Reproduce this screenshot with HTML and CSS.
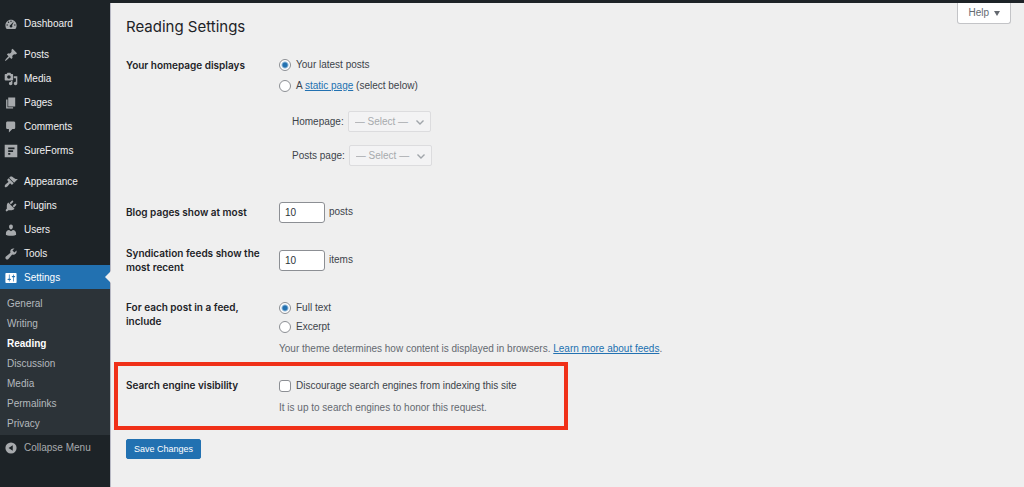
FILE: index.html
```html
<!DOCTYPE html>
<html lang="en">
<head>
    <meta charset="UTF-8">
    <meta name="viewport" content="width=device-width, initial-scale=1.0">
    <title>Reading Settings</title>
    <link rel="stylesheet" href="styles.css">
</head>
<body>

    <!-- Admin bar -->
    <div class="admin-bar"></div>

    <div class="layout">
        <!-- Admin menu -->
        <nav class="menu">
            <ul class="menu-list">
                <li><a href="#" class="menu-link">
                    <svg class="icon" viewBox="0 0 20 20"><path fill-rule="evenodd" d="M3.76 17h12.48c1.1-1.37 1.76-3.11 1.76-5 0-4.42-3.58-8-8-8s-8 3.58-8 8c0 1.89.66 3.63 1.76 5zM9 6a1 1 0 1 0 2 0 1 1 0 1 0-2 0zM5.5 7.5a1 1 0 1 0 2 0 1 1 0 1 0-2 0zM3.5 11.500a1 1 0 1 0 2 0 1 1 0 1 0-2 0zM14.500 11.500a1 1 0 1 0 2 0 1 1 0 1 0-2 0zM14 6.500L11.500 12.200c.9.900.7 2.800-1.500 2.800-2 0-2.600-2.200-1.200-3.100z"/></svg>
                    Dashboard</a></li>
                <li class="separator"></li>
                <li><a href="#" class="menu-link">
                    <svg class="icon" viewBox="0 0 20 20"><path d="M10.44 3.02l1.82-1.82 6.36 6.35-1.83 1.82c-1.05-.68-2.48-.57-3.41.36l-.75.75c-.92.93-1.04 2.35-.35 3.41l-1.83 1.82-2.41-2.41-2.8 2.79c-.42.42-3.38 2.71-3.8 2.29s1.86-3.39 2.28-3.81l2.79-2.79L4.1 9.36l1.83-1.82c1.05.69 2.48.57 3.4-.36l.75-.75c.93-.92 1.05-2.35.36-3.41z"/></svg>
                    Posts</a></li>
                <li><a href="#" class="menu-link">
                    <svg class="icon" viewBox="0 0 20 20"><path d="M13 11V4c0-.55-.45-1-1-1h-1.67L9 1H5L3.67 3H2c-.55 0-1 .45-1 1v7c0 .55.45 1 1 1h10c.55 0 1-.45 1-1zM7 4.500c1.380 0 2.500 1.120 2.500 2.500S8.380 9.500 7 9.500 4.500 8.380 4.500 7 5.620 4.500 7 4.500zM14 6h5v10.500c0 1.380-1.120 2.500-2.500 2.500S14 17.880 14 16.500s1.120-2.500 2.500-2.500c.17 0 .34.02.5.05V9h-3V6zm-4 8.050V13h2v3.500c0 1.380-1.120 2.500-2.500 2.500S7 17.880 7 16.500 8.120 14 9.500 14c.17 0 .34.02.5.05z"/></svg>
                    Media</a></li>
                <li><a href="#" class="menu-link">
                    <svg class="icon" viewBox="0 0 20 20"><path d="M6 15V2h10v13H6zm-1 1h8v2H3V5h2v11z"/></svg>
                    Pages</a></li>
                <li><a href="#" class="menu-link">
                    <svg class="icon" viewBox="0 0 20 20"><path d="M5 2h9c1.100 0 2 .9 2 2v7c0 1.100-.9 2-2 2h-2l-5 5v-5H5c-1.100 0-2-.9-2-2V4c0-1.100.9-2 2-2z"/></svg>
                    Comments</a></li>
                <li><a href="#" class="menu-link">
                    <svg class="icon" viewBox="0 0 20 20"><path fill-rule="evenodd" d="M1 1h18v18H1zM6 5v2.500h9V5zM6 9v2.500h7V9zM6 13v2.500h3V13z"/></svg>
                    SureForms</a></li>
                <li class="separator"></li>
                <li><a href="#" class="menu-link">
                    <svg class="icon" viewBox="0 0 20 20"><path d="M14.480 11.060L7.410 3.990l1.500-1.500c.5-.56 2.300-.47 3.510.32 1.210.8 1.430 1.280 2.910 2.100 1.180.64 2.450 1.260 4.450.85zm-.71.71L6.700 4.700 4.930 6.470c-.39.39-.39 1.020 0 1.410l1.060 1.060c.39.39.39 1.030 0 1.420-.6.6-1.430 1.110-2.210 1.690-.35.26-.7.53-1.010.84C1.430 14.230.4 16.080 1.400 17.070c.99 1 2.840-.03 4.180-1.360.31-.31.58-.66.85-1.020.57-.78 1.080-1.610 1.690-2.210.39-.39 1.020-.39 1.410 0l1.060 1.060c.39.39 1.020.39 1.410 0z"/></svg>
                    Appearance</a></li>
                <li><a href="#" class="menu-link">
                    <svg class="icon" viewBox="0 0 20 20"><path d="M13.110 4.360L9.870 7.600 8 5.730l3.240-3.240c.35-.34 1.050-.2 1.560.32.52.51.66 1.210.31 1.550zm-8 1.770l.91-1.120 9.010 9.010-1.190.84c-.71.71-2.630 1.160-3.820 1.160H6.140L4.900 17.260c-.59.59-1.540.59-2.120 0-.59-.58-.59-1.530 0-2.120l1.240-1.240v-3.880c0-1.130.4-3.190 1.090-3.890zm7.260 3.970l3.240-3.240c.34-.35 1.040-.21 1.550.31.52.51.66 1.210.31 1.550l-3.240 3.250z"/></svg>
                    Plugins</a></li>
                <li><a href="#" class="menu-link">
                    <svg class="icon" viewBox="0 0 20 20"><path d="M10 9.250c-2.270 0-2.730-3.440-2.730-3.440C7 4.020 7.820 2 9.970 2c2.160 0 2.980 2.020 2.710 3.810 0 0-.41 3.440-2.680 3.440zm0 2.570L12.720 10c2.390 0 4.520 2.330 4.520 4.530v2.490s-3.650 1.130-7.240 1.130c-3.650 0-7.240-1.130-7.240-1.130v-2.490c0-2.250 1.940-4.480 4.470-4.480z"/></svg>
                    Users</a></li>
                <li><a href="#" class="menu-link">
                    <svg class="icon" viewBox="0 0 20 20"><path d="M16.680 9.770c-1.340 1.340-3.300 1.670-4.950.99l-5.410 6.520c-.99.99-2.590.99-3.580 0s-.99-2.590 0-3.570l6.520-5.420c-.68-1.650-.35-3.610.99-4.950 1.280-1.280 3.120-1.620 4.720-1.060l-2.890 2.890 2.820 2.820 2.860-2.870c.53 1.580.18 3.390-1.080 4.650z"/></svg>
                    Tools</a></li>
                <li>
                    <a href="#" class="menu-link current">
                    <svg class="icon" viewBox="0 0 20 20"><path d="M18 16V4c0-.55-.45-1-1-1H3c-.55 0-1 .45-1 1v12c0 .55.45 1 1 1h14c.55 0 1-.45 1-1zM8 11h1c.55 0 1 .45 1 1s-.45 1-1 1H8v1.500c0 .28-.22.5-.5.5s-.5-.22-.5-.5V13H6c-.55 0-1-.45-1-1s.45-1 1-1h1V5.500c0-.28.22-.5.5-.5s.5.22.5.5V11zm5-2h-1c-.55 0-1-.45-1-1s.45-1 1-1h1V5.500c0-.28.22-.5.5-.5s.5.22.5.5V7h1c.55 0 1 .45 1 1s-.45 1-1 1h-1v5.500c0 .28-.22.5-.5.5s-.5-.22-.5-.5V9z"/></svg>
                    Settings</a>
                    <ul class="submenu">
                        <li><a href="#">General</a></li>
                        <li><a href="#">Writing</a></li>
                        <li><a href="#" class="active">Reading</a></li>
                        <li><a href="#">Discussion</a></li>
                        <li><a href="#">Media</a></li>
                        <li><a href="#">Permalinks</a></li>
                        <li><a href="#">Privacy</a></li>
                    </ul>
                </li>
                <li><button type="button" class="menu-link collapse">
                    <svg class="icon" viewBox="0 0 20 20"><path fill-rule="evenodd" d="M10 2a8 8 0 1 0 0 16 8 8 0 1 0 0-16zM12.500 6v8L6.500 10z"/></svg>
                    Collapse Menu</button></li>
            </ul>
        </nav>

        <main class="content">
            <header class="page-head">
                <h1>Reading Settings</h1>
                <button type="button" class="help">Help <span class="caret"></span></button>
            </header>

            <form>
                <div class="row row-homepage" role="group" aria-labelledby="homepage-title">
                    <div class="title" id="homepage-title">Your homepage displays</div>
                    <div class="field choices">
                        <label class="choice"><input type="radio" name="front" checked> Your latest posts</label>
                        <label class="choice"><input type="radio" name="front"> <span>A <a href="#">static page</a> (select below)</span></label>
                        <div class="page-selects">
                            <div class="page-select">
                                <label for="home">Homepage:</label>
                                <select id="home" disabled><option>— Select —</option></select>
                            </div>
                            <div class="page-select">
                                <label for="posts">Posts page:</label>
                                <select id="posts" disabled><option>— Select —</option></select>
                            </div>
                        </div>
                    </div>
                </div>

                <div class="row row-number">
                    <label class="title" for="per-page">Blog pages show at most</label>
                    <div class="field number"><input type="text" inputmode="numeric" id="per-page" value="10"> posts</div>
                </div>

                <div class="row row-number">
                    <label class="title" for="per-feed">Syndication feeds show the most recent</label>
                    <div class="field number"><input type="text" inputmode="numeric" id="per-feed" value="10"> items</div>
                </div>

                <div class="row row-feed" role="group" aria-labelledby="feed-title">
                    <div class="title" id="feed-title">For each post in a feed, include</div>
                    <div class="field">
                        <label class="choice"><input type="radio" name="feed" checked> Full text</label>
                        <label class="choice"><input type="radio" name="feed"> Excerpt</label>
                        <p class="description">Your theme determines how content is displayed in browsers. <a href="#">Learn more about feeds</a>.</p>
                    </div>
                </div>

                <!-- Highlighted setting -->
                <div class="row highlight" role="group" aria-labelledby="search-title">
                    <div class="title" id="search-title">Search engine visibility</div>
                    <div class="field">
                        <label class="choice"><input type="checkbox"> Discourage search engines from indexing this site</label>
                        <p class="description">It is up to search engines to honor this request.</p>
                    </div>
                </div>

                <button type="submit" class="save">Save Changes</button>
            </form>
        </main>
    </div>

</body>
</html>
```
FILE: styles.css
```css
* {
    box-sizing: border-box;
}
body {
    margin: 0;
    min-height: 100vh;
    display: flex;
    flex-direction: column;
    background-color: #efefef;
    color: #3c434a;
    font-family: "Liberation Sans", Arial, sans-serif;
    font-size: 10px;
    line-height: 14px;
}
ul {
    list-style: none;
    margin: 0;
    padding: 0;
}
a {
    color: #2271b1;
}
input, select, button {
    font: inherit;
    margin: 0;
}
.admin-bar {
    height: 3px;
    background-color: #1d2327;
}
.layout {
    display: flex;
    flex: 1;
}

/* Admin menu */
.menu {
    flex: none;
    width: 110px;
    padding-top: 8px;
    background-color: #1d2327;
}
.menu-link {
    display: flex;
    align-items: center;
    gap: 6px;
    width: 100%;
    height: 24px;
    padding: 1px 4px 0;
    color: #f0f0f1;
    text-decoration: none;
}
.icon {
    width: 14px;
    height: 14px;
    fill: #a7aaad;
}
.separator {
    height: 7px;
}
.current {
    position: relative;
    background-color: #2271b1;
    color: #fff;
}
.current .icon {
    fill: #fff;
}
/* Arrow pointing at the open page */
.current::after {
    content: "";
    position: absolute;
    right: -1px;
    top: 6px;
    border: 6px solid transparent;
    border-left: 0;
    border-right-color: #efefef;
}
.submenu {
    padding: 5px 0 1px;
    background-color: #2c3338;
}
.submenu a {
    display: block;
    padding: 0 7px;
    line-height: 20px;
    color: #b4b9be;
    text-decoration: none;
}
.submenu .active {
    color: #fff;
    font-weight: 600;
}
.collapse {
    border: none;
    background: none;
    color: #a7aaad;
    cursor: pointer;
}

/* Page */
.content {
    flex: 1;
    padding-left: 15px;
    border-left: 1px solid #b8b9c4;
}
.page-head {
    display: flex;
    justify-content: space-between;
    align-items: flex-start;
    padding-right: 13px;
}
h1, .title {
    font-family: Inter, "Liberation Sans", sans-serif;
}
h1 {
    margin: 14px 0 0;
    font-size: 15px;
    line-height: 20px;
    font-weight: 400;
    color: #1d2327;
}
.help {
    display: flex;
    align-items: center;
    gap: 5px;
    height: 21px;
    padding: 0 10px;
    border: 1px solid #c3c4c7;
    border-top: 0;
    border-radius: 0 0 3px 3px;
    background-color: #fff;
    color: #646970;
}
.caret {
    border: 3px solid transparent;
    border-top: 5px solid #646970;
    border-bottom: 0;
}
.row {
    display: flex;
    align-items: flex-start;
}
.title {
    flex: none;
    width: 153px;
    padding-right: 18px;
    font-weight: 600;
    color: #1d2327;
}
.row-homepage {
    margin-top: 21px;
}
.choice {
    display: flex;
    align-items: center;
    gap: 5px;
    width: fit-content;
    min-height: 19px;
}
.choices .choice {
    margin-bottom: 7px;
    min-height: 14px;
}
input[type="radio"], input[type="checkbox"] {
    appearance: none;
    width: 12px;
    height: 12px;
    border: 1px solid #8c8f94;
    border-radius: 50%;
    background-color: #fff;
}
input[type="checkbox"] {
    border-radius: 3px;
}
input[type="radio"]:checked {
    background-image: radial-gradient(circle, #2271b1 2px, #fff 4px);
}
.page-selects {
    display: flex;
    flex-direction: column;
    gap: 13px;
    margin: 18px 0 22px 13px;
}
.page-select {
    display: flex;
    align-items: center;
    gap: 4px;
}
select {
    appearance: none;
    width: 83px;
    height: 21px;
    padding: 0 6px;
    border: 1px solid #dcdcde;
    border-radius: 2px;
    background: #f3f3f4 url("data:image/svg+xml,%3Csvg xmlns='http://www.w3.org/2000/svg' viewBox='0 0 10 10'%3E%3Cpath d='M1.500 3.500L5 7l3.500-3.500' fill='none' stroke='%23a0a5aa' stroke-width='1.400'/%3E%3C/svg%3E") no-repeat right 5px center / 10px 10px;
}
select:disabled {
    color: #a7aaad;
    opacity: 1;
}
.row-number {
    align-items: center;
    min-height: 48px;
}
.number {
    display: flex;
    align-items: center;
    gap: 4px;
}
.number input {
    width: 46px;
    height: 21px;
    padding: 0 5px;
    border: 1px solid #8c8f94;
    border-radius: 3px;
    background-color: #fff;
    color: #2c3338;
}
.row-feed {
    margin-top: 14px;
}
.row-feed .title, .highlight .title {
    padding-top: 2px;
}
.description {
    margin: 6px 0 0;
    color: #646970;
}

/* Red frame round the search engine setting */
.highlight {
    width: 454px;
    max-width: 100%;
    margin: 6px 0 9px -12px;
    padding: 10px 8px 11px;
    border: 4px solid #f03018;
}
.save {
    height: 20px;
    padding: 0 7px;
    border: 1px solid #2271b1;
    border-radius: 2px;
    background-color: #2271b1;
    color: #fff;
    font-size: 9px;
    cursor: pointer;
}
```
